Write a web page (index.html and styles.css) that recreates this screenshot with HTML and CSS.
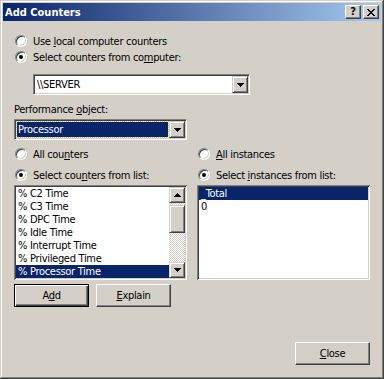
FILE: index.html
```html
<!doctype html>
<html lang="en">
    <head>
        <meta charset="UTF-8" />
        <link rel="stylesheet" href="styles.css">
        <title>Add Counters</title>
    </head>
    <body>
        <div class="window">
            <div class="titlebar">
                <span class="title">Add Counters</span>
                <div class="caption-buttons">
                    <span class="cap-btn help">?</span>
                    <span class="cap-btn">
                        <svg width="8" height="7" viewBox="0 0 8 7">
                            <path d="M0 0h2v1h1v1h2v-1h1v-1h2v1h-1v1h-1v1h-1v1h1v1h1v1h1v1h-2v-1h-1v-1h-2v1h-1v1h-2v-1h1v-1h1v-1h1v-1h-1v-1h-1v-1h-1z" fill="#000"/>
                        </svg>
                    </span>
                </div>
            </div>

            <div class="content">
                <label class="radio">
                    <span class="radio-mark"></span>
                    <span>Use <u>l</u>ocal computer counters</span>
                </label>
                <label class="radio checked">
                    <span class="radio-mark"></span>
                    <span>Select counters from co<u>m</u>puter:</span>
                </label>

                <div class="combo combo-computer">
                    <span class="combo-text">\\SERVER</span>
                    <span class="drop-btn">
                        <svg width="7" height="4" viewBox="0 0 7 4"><path d="M0 0h7v1h-1v1h-1v1h-1v1h-1v-1h-1v-1h-1v-1h-1z" fill="#000"/></svg>
                    </span>
                </div>

                <div class="field-label">Performance <u>o</u>bject:</div>
                <div class="combo combo-object">
                    <span class="combo-text focused">Processor</span>
                    <span class="drop-btn">
                        <svg width="7" height="4" viewBox="0 0 7 4"><path d="M0 0h7v1h-1v1h-1v1h-1v1h-1v-1h-1v-1h-1v-1h-1z" fill="#000"/></svg>
                    </span>
                </div>

                <div class="columns">
                    <div class="column">
                        <label class="radio">
                            <span class="radio-mark"></span>
                            <span>All cou<u>n</u>ters</span>
                        </label>
                        <label class="radio checked">
                            <span class="radio-mark"></span>
                            <span>Select cou<u>n</u>ters from list:</span>
                        </label>
                        <div class="listbox">
                            <ul class="items">
                                <li>% C2 Time</li>
                                <li>% C3 Time</li>
                                <li>% DPC Time</li>
                                <li>% Idle Time</li>
                                <li>% Interrupt Time</li>
                                <li>% Privileged Time</li>
                                <li class="selected">% Processor Time</li>
                            </ul>
                            <div class="scrollbar">
                                <span class="scroll-btn">
                                    <svg width="7" height="4" viewBox="0 0 7 4"><path d="M3 0h1v1h1v1h1v1h1v1h-7v-1h1v-1h1v-1h1z" fill="#000"/></svg>
                                </span>
                                <div class="track">
                                    <span class="thumb"></span>
                                </div>
                                <span class="scroll-btn">
                                    <svg width="7" height="4" viewBox="0 0 7 4"><path d="M0 0h7v1h-1v1h-1v1h-1v1h-1v-1h-1v-1h-1v-1h-1z" fill="#000"/></svg>
                                </span>
                            </div>
                        </div>
                        <div class="button-row">
                            <button class="btn default">A<u>d</u>d</button>
                            <button class="btn"><u>E</u>xplain</button>
                        </div>
                    </div>

                    <div class="column">
                        <label class="radio">
                            <span class="radio-mark"></span>
                            <span><u>A</u>ll instances</span>
                        </label>
                        <label class="radio checked">
                            <span class="radio-mark"></span>
                            <span>Select <u>i</u>nstances from list:</span>
                        </label>
                        <div class="listbox">
                            <ul class="items">
                                <li class="selected">_Total</li>
                                <li>0</li>
                            </ul>
                        </div>
                    </div>
                </div>

                <div class="footer">
                    <button class="btn"><u>C</u>lose</button>
                </div>
            </div>
        </div>
    </body>
</html>
```

FILE: styles.css
```css
html,
body {
    margin: 0;
    padding: 0;
}
body {
    font-family: "DejaVu Sans Condensed", "Liberation Sans", sans-serif;
    font-stretch: condensed;
    font-size: 11px;
    letter-spacing: -0.3px;
    color: #000;
    background-color: #d4d0c8;
}
u {
    text-decoration: underline;
    text-underline-offset: 1px;
}

/* -- WINDOW FRAME -- */

.window {
    width: 384px;
    height: 379px;
    box-sizing: border-box;
    padding: 3px;
    display: flex;
    flex-direction: column;
    background-color: #d4d0c8;
    box-shadow:
        inset -1px -1px #404040,
        inset 1px 1px #d4d0c8,
        inset -2px -2px #808080,
        inset 2px 2px #fff;
}
.titlebar {
    height: 18px;
    display: flex;
    align-items: center;
    justify-content: space-between;
    padding: 0 2px;
    background: linear-gradient(to right, #0a246a, #a6caf0);
}
.title {
    color: #fff;
    font-weight: bold;
    font-size: 11px;
    letter-spacing: 0;
}
.caption-buttons {
    display: flex;
    gap: 2px;
}
.cap-btn {
    width: 16px;
    height: 14px;
    box-sizing: border-box;
    display: flex;
    align-items: center;
    justify-content: center;
    background-color: #d4d0c8;
    border: 1px solid;
    border-color: #fff #404040 #404040 #fff;
    box-shadow: inset -1px -1px #808080;
}
.cap-btn.help {
    font-weight: bold;
    font-size: 11px;
    line-height: 12px;
    letter-spacing: 0;
}

/* -- CONTENT -- */

.content {
    flex: 1;
    display: flex;
    flex-direction: column;
    padding: 12px 11px 11px;
}
.radio {
    height: 16px;
    display: flex;
    align-items: center;
    gap: 6px;
    padding-left: 1px;
}
.radio-mark {
    width: 12px;
    height: 12px;
    box-sizing: border-box;
    flex-shrink: 0;
    position: relative;
    border-radius: 50%;
    border: 1px solid;
    border-color: #808080 #fff #fff #808080;
    box-shadow:
        inset 1px 1px #404040,
        inset -1px -1px #d4d0c8;
    background-color: #fff;
}
.radio.checked .radio-mark::after {
    content: "";
    position: absolute;
    left: 3px;
    top: 3px;
    width: 4px;
    height: 4px;
    border-radius: 50%;
    background-color: #000;
}
.field-label {
    height: 13px;
    line-height: 13px;
    margin-top: 8px;
}

/* combo boxes */
.combo {
    height: 21px;
    box-sizing: border-box;
    display: flex;
    padding: 0;
    background-color: #fff;
    border: 1px solid;
    border-color: #808080 #fff #fff #808080;
    box-shadow:
        inset 1px 1px #404040,
        inset -1px -1px #d4d0c8;
}
.combo-computer {
    width: 217px;
    margin: 9px 0 0 19px;
}
.combo-object {
    width: 173px;
    margin-top: 3px;
}
.combo-text {
    flex: 1;
    margin: 1px 0 1px 1px;
    padding-left: 2px;
    line-height: 17px;
}
.combo-text.focused {
    margin: 2px 1px 2px 2px;
    padding-left: 1px;
    line-height: 15px;
    color: #fff;
    background-color: #0a246a;
    outline: 1px dotted #d8c878;
}
.drop-btn,
.scroll-btn {
    width: 16px;
    box-sizing: border-box;
    display: flex;
    align-items: center;
    justify-content: center;
    background-color: #d4d0c8;
    border: 1px solid;
    border-color: #d4d0c8 #404040 #404040 #d4d0c8;
    box-shadow:
        inset 1px 1px #fff,
        inset -1px -1px #808080;
}
.drop-btn {
    height: 17px;
    margin: 1px 1px 1px 0;
}
.drop-btn svg {
    margin-top: 1px;
}

/* -- TWO COLUMNS -- */

.columns {
    display: grid;
    grid-template-columns: 173px 173px;
    column-gap: 10px;
    margin-top: 6px;
}
.column {
    display: flex;
    flex-direction: column;
    gap: 5px;
}
.column .listbox {
    margin-top: -3px;
}
.listbox {
    height: 95px;
    box-sizing: border-box;
    display: flex;
    padding: 2px;
    background-color: #fff;
    border: 0;
    box-shadow:
        inset 1px 1px #808080,
        inset -1px -1px #fff,
        inset 2px 2px #404040,
        inset -2px -2px #d4d0c8;
}
.items {
    flex: 1;
    list-style: none;
    margin: 0;
    padding: 0;
    overflow: hidden;
}
.items li {
    height: 13px;
    line-height: 13px;
    padding-left: 2px;
    white-space: nowrap;
}
.items li.selected {
    color: #fff;
    background-color: #0a246a;
}
.scrollbar {
    width: 16px;
    display: flex;
    flex-direction: column;
}
.scroll-btn {
    height: 16px;
}
.track {
    flex: 1;
    background: repeating-conic-gradient(#fff 0 25%, #d4d0c8 0 50%) 0 0 / 2px 2px;
}
.thumb {
    display: block;
    height: 28px;
    margin-top: 2px;
    box-sizing: border-box;
    background-color: #d4d0c8;
    border: 1px solid;
    border-color: #d4d0c8 #404040 #404040 #d4d0c8;
    box-shadow:
        inset 1px 1px #fff,
        inset -1px -1px #808080;
}

/* -- BUTTONS -- */

.button-row {
    display: flex;
    gap: 7px;
    margin-top: -1px;
}
.btn {
    appearance: none;
    width: 75px;
    height: 23px;
    box-sizing: border-box;
    padding: 0;
    margin: 0;
    font: inherit;
    letter-spacing: inherit;
    color: #000;
    background-color: #d4d0c8;
    border: 1px solid;
    border-color: #fff #404040 #404040 #fff;
    box-shadow: inset -1px -1px #808080;
}
.btn.default {
    border-color: #000;
    box-shadow:
        inset 1px 1px #fff,
        inset -1px -1px #404040,
        inset -2px -2px #808080;
}
.footer {
    margin-top: auto;
    display: flex;
    justify-content: flex-end;
}
```
